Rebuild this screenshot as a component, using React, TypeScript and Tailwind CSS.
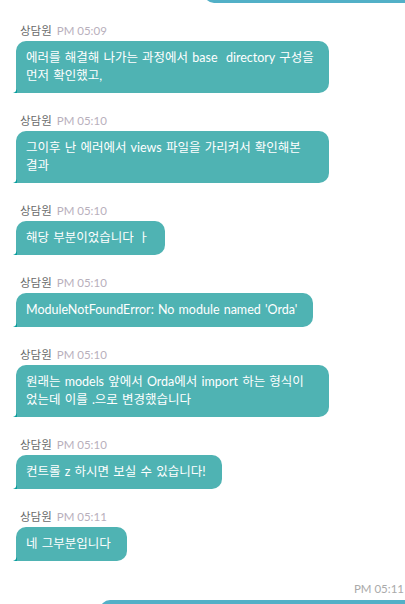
const messages = [
  { time: 'PM 05:09', lines: ['에러를 해결해 나가는 과정에서 base  directory 구성을', '먼저 확인했고,'] },
  { time: 'PM 05:10', lines: ['그이후 난 에러에서 views 파일을 가리켜서 확인해본', '결과'] },
  { time: 'PM 05:10', lines: ['해당 부분이었습니다 ㅏ'] },
  { time: 'PM 05:10', lines: ["ModuleNotFoundError: No module named 'Orda'"] },
  { time: 'PM 05:10', lines: ['원래는 models 앞에서 Orda에서 import 하는 형식이', '었는데 이를 .으로 변경했습니다'] },
  { time: 'PM 05:10', lines: ['컨트롤 z 하시면 보실 수 있습니다!'] },
  { time: 'PM 05:11', lines: ['네 그부분입니다'] },
]

const Tail = () => (
  <svg
    className="absolute -left-[3px] bottom-0"
    width="4"
    height="4"
    viewBox="0 0 4 4"
  >
    <path d="M4 0 L4 4 L0 4 Q3 3 4 0 Z" fill="#0a9e9e" />
  </svg>
)

const App = () => {
  return (
    <div
      className="w-[405px] h-[604px] overflow-hidden bg-white"
      style={{ fontFamily: 'Lato, "Noto Sans CJK KR", sans-serif' }}
    >
      <div className="flex justify-end h-[3px] overflow-visible">
        <div className="w-[201px] h-[40px] -mt-[37px] shrink-0 bg-[#52b0c7] rounded-bl-[10px]" />
      </div>

      <div className="flex flex-col pl-[16px] mt-[21px]">
        {messages.map((m, idx) => (
          <div key={idx} className={idx === 0 ? '' : 'mt-[21px]'}>
            <div className="flex items-center gap-[5px] pl-[4px] h-[14px] mb-[3px] text-[11.5px] leading-[14px] overflow-hidden">
              <span className="text-[#6a6a6a]">상담원</span>
              <span className="text-[#b8afbc]">{m.time}</span>
            </div>
            <div
              className={`relative bg-[#4fb3b3] rounded-[10px] rounded-bl-none pl-[10px] pr-[16px] py-[8px] text-[12.5px] leading-[18px] text-white whitespace-pre [word-spacing:1px] ${
                m.lines.length > 1 ? 'w-[313px]' : 'w-fit'
              }`}
            >
              {m.lines.map((l, i) => (
                <div key={i} className="h-[18px]">{l}</div>
              ))}
              <Tail />
            </div>
          </div>
        ))}
      </div>

      <div className="mt-[21px] h-[14px] text-right text-[11.5px] leading-[14px] text-[#aaaaaa] pr-[1px] overflow-hidden">
        PM 05:11
      </div>
      <div className="flex justify-end mt-[4px]">
        <div className="w-[305px] h-[30px] shrink-0 bg-[#52b0c7] rounded-tl-[10px]" />
      </div>
    </div>
  )
}

export default App
